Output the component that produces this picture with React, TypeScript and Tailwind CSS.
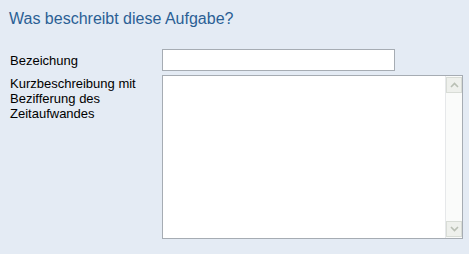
import React from 'react';

const ScrollButton = ({ up }: { up: boolean }) => (
  <div className="w-[16px] h-[16px] border border-[#d8dcd6] bg-[#eef0ec] flex items-center justify-center">
    <svg width="9" height="6" viewBox="0 0 9 6">
      <path
        d={up ? 'M1 5 L4.5 1.5 L8 5' : 'M1 1 L4.5 4.5 L8 1'}
        fill="none"
        stroke="#b9bfb4"
        strokeWidth="1.6"
      />
    </svg>
  </div>
);

const App = () => {
  return (
    <div className="w-[469px] h-[254px] bg-[#e4ebf4] font-['Liberation_Sans',Arial,sans-serif] text-black overflow-hidden">
      <h1 className="pl-[9px] pt-[9px] text-[16px] leading-[19px] text-[#2b5f95]">
        Was beschreibt diese Aufgabe?
      </h1>
      <div className="mt-[21px] flex flex-col gap-[4px] pl-[10px]">
        <div className="flex items-center">
          <label className="w-[152px] text-[13px] leading-[15px]">Bezeichung</label>
          <input
            type="text"
            className="w-[233px] h-[22px] bg-white border border-[#a6acb3] outline-none"
          />
        </div>
        <div className="flex items-start">
          <label className="w-[152px] text-[13px] leading-[15px] pt-[1px] pr-2">
            Kurzbeschreibung mit Bezifferung des Zeitaufwandes
          </label>
          <div className="w-[301px] h-[164px] bg-white border border-[#a6acb3] flex">
            <textarea className="flex-1 resize-none outline-none bg-white" />
            <div className="w-[17px] border-l border-[#e6e8ea] bg-[#fafbfa] flex flex-col justify-between py-[1px]">
              <ScrollButton up />
              <ScrollButton up={false} />
            </div>
          </div>
        </div>
      </div>
    </div>
  );
};

export default App;
